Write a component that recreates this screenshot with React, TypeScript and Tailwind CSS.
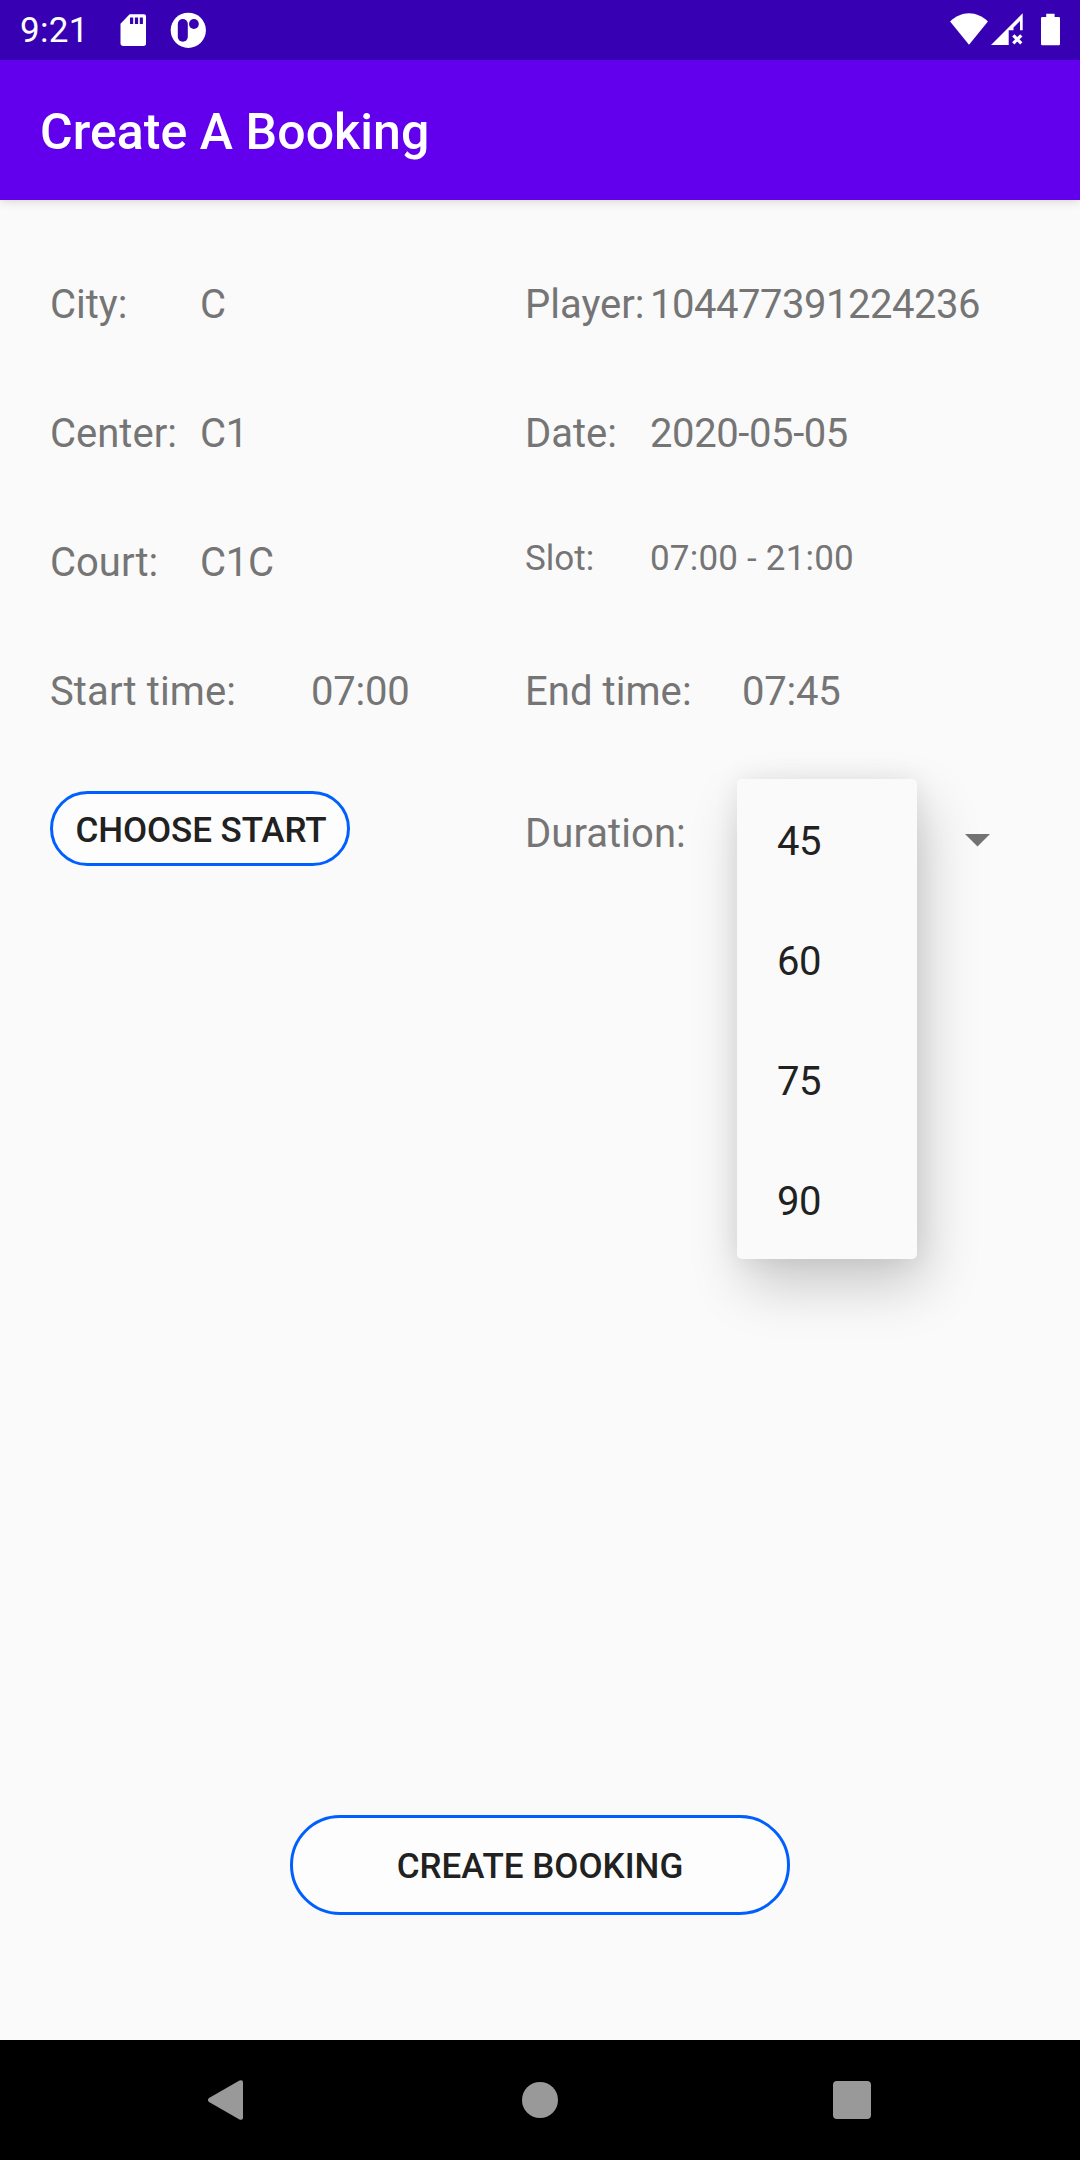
import type { ReactNode } from 'react';

const durations = ['45', '60', '75', '90'];

function StatusBar() {
  return (
    <div className="relative z-20 flex h-[60px] shrink-0 items-center bg-[#3700b3] pl-5 text-white">
      <span className="w-[100px] pt-0.5 text-[35px] leading-[58px] tracking-[0.3px]">9:21</span>
      <svg className="h-[60px] w-[26px]" viewBox="0 0 26 60" fill="currentColor">
        <path
          fillRule="evenodd"
          d="M9.6 14.3H23.6a2.6 2.6 0 0 1 2.6 2.6V43.3a2.8 2.8 0 0 1-2.6 2.7H3.2A2.8 2.8 0 0 1 .5 43.3V23.7ZM10 17.6v6.4h3.2v-6.4ZM14.9 17.6v6.4h3.2v-6.4ZM19.8 17.6v6.4h3.1v-6.4Z"
        />
      </svg>
      <svg className="ml-[24px] h-[60px] w-[36px]" viewBox="0 0 36 60">
        <circle cx="18.3" cy="30.3" r="17.6" fill="white" />
        <rect x="7.8" y="19" width="10" height="22.7" rx="5" fill="#3700b3" />
        <circle cx="23.9" cy="24" r="4.9" fill="#3700b3" />
      </svg>
      <div className="ml-auto flex pr-5">
        <svg className="h-[60px] w-[38px]" viewBox="0 0 38 60" fill="currentColor">
          <path d="M19 44.8L.1 21.4C5.600 16.200 12 13.200 19 13.200S32.400 16.200 37.900 21.400Z" />
        </svg>
        <svg className="ml-[2px] h-[60px] w-[34px]" viewBox="0 0 34 60" fill="currentColor">
          <path d="M1 45L32.700 13.300V30.300H30V21L23.500 27.500V30.300H18.700V45Z" />
          <path d="M23.300 35.300L31.300 43.300M31.300 35.300L23.300 43.300" stroke="currentColor" strokeWidth="3.200" />
        </svg>
        <svg className="ml-[17px] h-[60px] w-[19px]" viewBox="0 0 19 60" fill="currentColor">
          <path d="M5.200 13.700H13.600V17H17.700a1.300 1.300 0 0 1 1.300 1.300V44a1.300 1.300 0 0 1-1.300 1.300H1.300A1.300 1.300 0 0 1 0 44V18.300A1.300 1.300 0 0 1 1.300 17H5.200Z" />
        </svg>
      </div>
    </div>
  );
}

function AppBar() {
  return (
    <header className="relative z-10 flex h-[140px] shrink-0 items-center bg-[#6200ee] pt-1 pl-10 shadow-[0_1px_10px_rgba(0,0,0,0.16)]">
      <h1 className="text-[50px] leading-[60px] font-medium tracking-[0.06px] text-white">Create A Booking</h1>
    </header>
  );
}

function Field({ label, labelClass, children }: { label: string; labelClass: string; children?: ReactNode }) {
  return (
    <div className="flex">
      <span className={labelClass}>{label}</span>
      {children}
    </div>
  );
}

function DurationMenu() {
  return (
    <ul className="absolute top-[-28px] left-[212px] w-[180px] rounded-[5px] bg-[#fafafa] text-[#212121] shadow-[8px_26px_56px_0px_rgba(0,0,0,0.2),0_0_26px_rgba(0,0,0,0.07)]">
      {durations.map((d) => (
        <li key={d} className="h-[120px] pt-[36px] pl-10 leading-[53px] tracking-[-0.4px]">
          {d}
        </li>
      ))}
    </ul>
  );
}

export default function App() {
  return (
    <div className="flex h-[2160px] w-[1080px] flex-col overflow-hidden bg-[#fafafa] font-[Roboto,sans-serif]">
      <StatusBar />
      <AppBar />
      <main className="flex flex-1 flex-col px-[50px] pt-[78px] text-[40px] leading-[53px] whitespace-nowrap text-[#757575]">
        <div className="grid auto-rows-[53px] grid-cols-[475px_1fr] gap-y-[76px]">
          <Field label="City:" labelClass="w-[150px]">
            <span>C</span>
          </Field>
          <Field label="Player:" labelClass="w-[125px]">
            <span className="tracking-[-0.48px]">104477391224236</span>
          </Field>
          <Field label="Center:" labelClass="w-[150px]">
            <span className="tracking-[-0.3px]">C1</span>
          </Field>
          <Field label="Date:" labelClass="w-[125px]">
            <span className="tracking-[-0.4px]">2020-05-05</span>
          </Field>
          <Field label="Court:" labelClass="w-[150px]">
            <span className="tracking-[-0.3px]">C1C</span>
          </Field>
          <div className="text-[35px] leading-[46px]">
            <Field label="Slot:" labelClass="w-[125px]">
              <span className="tracking-[0.2px]">07:00 - 21:00</span>
            </Field>
          </div>
          <Field label="Start time:" labelClass="w-[261px] tracking-[0.1px]">
            <span className="tracking-[-0.25px]">07:00</span>
          </Field>
          <Field label="End time:" labelClass="w-[217px] tracking-[0.06px]">
            <span className="tracking-[-0.25px]">07:45</span>
          </Field>
        </div>
        <div className="mt-[73px] grid grid-cols-[475px_1fr]">
          <button className="h-[75px] w-[300px] rounded-full border-[3px] border-[#005fff] bg-[#fdfdfd] pt-1 pl-0.5 text-[35px] leading-[65px] font-medium tracking-[-0.06px] text-[#212121]">
            CHOOSE START
          </button>
          <div className="relative mt-4 flex">
            <span className="tracking-[0.06px]">Duration:</span>
            <svg className="mt-[27px] mr-[40px] ml-auto h-[13px] w-[25px]" viewBox="0 0 25 13" fill="#737373">
              <path d="M0 0H25L12.500 12.500Z" />
            </svg>
            <DurationMenu />
          </div>
        </div>
        <button className="mt-auto mb-[125px] h-[100px] w-[500px] self-center rounded-full border-[3px] border-[#005fff] bg-[#fdfdfd] pt-[3px] text-[35px] leading-[88px] font-medium text-[#212121]">
          CREATE BOOKING
        </button>
      </main>
      <nav className="flex h-[120px] shrink-0 items-center bg-black pl-[207px] text-[#999999]">
        <svg className="h-[42px] w-[36px]" viewBox="0 0 36 42" fill="currentColor">
          <path d="M2 19L32.500 1.500Q36 .2 36 3.500V38.500Q36 41.800 32.500 40.500L2 23Q-.2 21 2 19Z" />
        </svg>
        <span className="ml-[279px] size-[36px] rounded-full bg-[#999999]" />
        <span className="ml-[275px] size-[38px] rounded-[4px] bg-[#999999]" />
      </nav>
    </div>
  );
}
